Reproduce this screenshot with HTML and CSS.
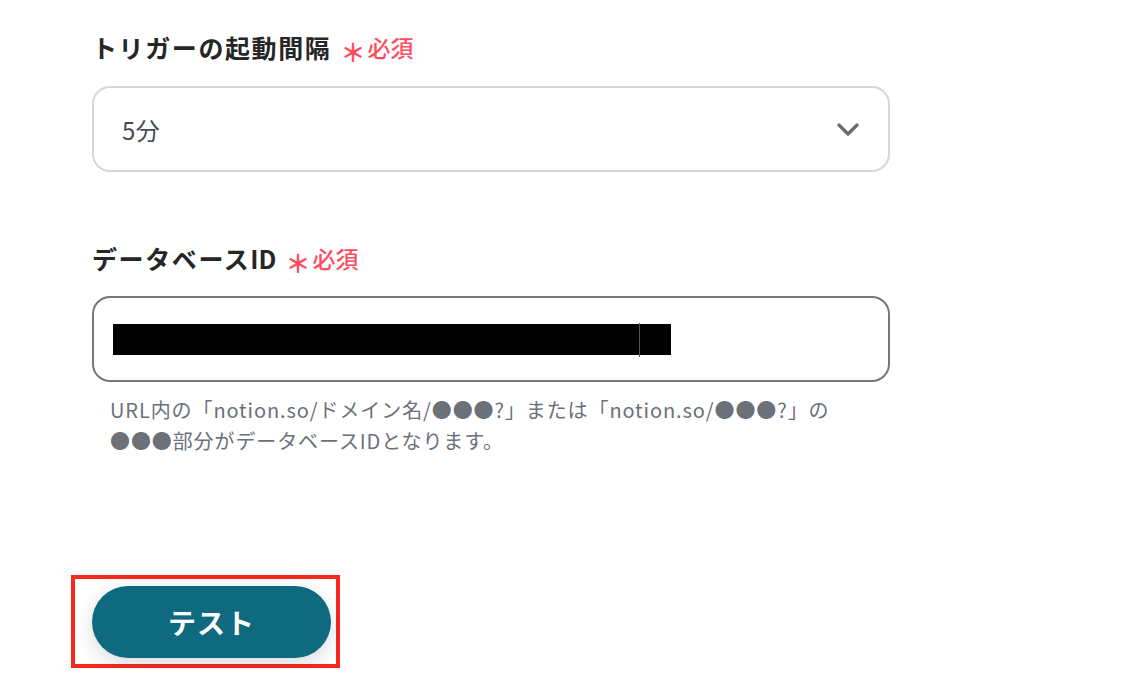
FILE: index.html
```html
<!DOCTYPE html>
<html lang="ja">
<head>
<meta charset="utf-8">
<link rel="stylesheet" href="styles.css">
</head>
<body>
<div class="page">
  <div class="field">
    <div class="label">トリガーの起動間隔<span class="req"><span class="ast">＊</span>必須</span></div>
    <div class="select">
      <span class="select-value">5分</span>
      <svg class="chev" width="22" height="13" viewBox="0 0 22 13"><path d="M2 2 L11 11 L20 2" fill="none" stroke="#6b6b6b" stroke-width="3.2" stroke-linecap="round" stroke-linejoin="round"/></svg>
    </div>
  </div>
  <div class="field field2">
    <div class="label">データベース<span class="latin">ID</span><span class="req"><span class="ast">＊</span>必須</span></div>
    <div class="input">
      <span class="redact"></span>
      <span class="caret"></span>
    </div>
    <p class="help">URL内の「notion.so/ドメイン名/●●●?」または「notion.so/●●●?」の<br>●●●部分がデータベースIDとなります。</p>
  </div>
  <div class="highlight">
    <button class="btn">テスト</button>
  </div>
</div>
</body>
</html>
```

FILE: styles.css
```css
* { box-sizing: border-box; }
html, body { margin: 0; padding: 0; background: #ffffff; }
body {
  font-family: "Noto Sans CJK JP", "Noto Sans", sans-serif;
  color: #262626;
}
.page {
  padding: 31px 0 0 92px;
  width: 890px;
}
.label {
  font-size: 25px;
  line-height: 32px;
  height: 32px;
  font-weight: 700;
  letter-spacing: 1.6px;
  color: #262626;
  display: flex;
  align-items: center;
}
.latin { letter-spacing: 0; }
.req {
  color: #ff4d5e;
  font-size: 23px;
  font-weight: 500;
  letter-spacing: 0;
  margin-left: 9px;
  display: flex;
  align-items: center;
}
.ast {
  font-size: 25px;
  font-weight: 700;
  margin-right: 2px;
  position: relative;
  top: 4px;
}
.select {
  margin-top: 23px;
  height: 86px;
  width: 798px;
  border: 2px solid #d4d8dd;
  border-radius: 18px;
  display: flex;
  align-items: center;
  justify-content: space-between;
  padding: 0 29px 0 28px;
}
.select-value {
  font-size: 24px;
  color: #474c54;
  letter-spacing: 0.5px;
}
.chev { display: block; }
.field2 { margin-top: 70px; }
.input {
  position: relative;
  margin-top: 22px;
  height: 86px;
  width: 798px;
  border: 2px solid #777777;
  border-radius: 18px;
  display: flex;
  align-items: center;
  padding-left: 19px;
}
.redact {
  display: block;
  width: 558px;
  height: 31px;
  background: #000;
}
.caret {
  position: absolute;
  left: 545px;
  top: 25px;
  width: 1px;
  height: 34px;
  background: #555;
}
.help {
  margin: 12px 0 0 0;
  padding-left: 18px;
  font-size: 20px;
  line-height: 31px;
  letter-spacing: 0.9px;
  color: #6b7079;
}
.highlight {
  margin-top: 119px;
  margin-left: -21px;
  width: 269px;
  border: 4px solid #f7291b;
  padding: 7px 5px 6px 17px;
}
.btn {
  display: block;
  width: 239px;
  height: 72px;
  border: none;
  border-radius: 36px;
  background: #0f6a80;
  color: #ffffff;
  font-family: "Noto Sans CJK JP", sans-serif;
  font-size: 28px;
  font-weight: 700;
  letter-spacing: 1px;
  box-shadow: 0 6px 18px rgba(40, 60, 80, 0.18);
}
```
